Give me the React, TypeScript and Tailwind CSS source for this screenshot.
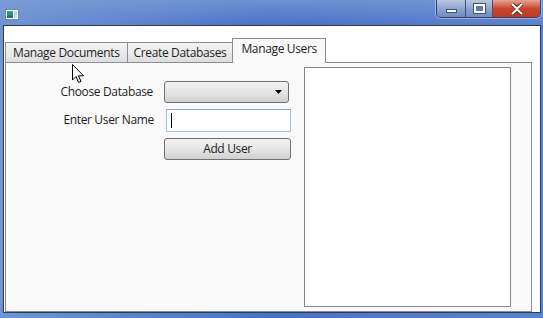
import React from "react";

const font = { fontFamily: '"Open Sans", "Noto Sans", sans-serif' };

function CaptionButtons() {
  return (
    <div className="flex h-[18px] rounded-b-[5px] border border-t-0 border-[#30456a] overflow-hidden shadow-[0_0_0_1px_rgba(255,255,255,0.35)]">
      <div className="w-[29px] flex items-center justify-center bg-gradient-to-b from-[#b8c8e4] via-[#8ea5cf] to-[#6f8cc0] border-r border-[#3c5277]">
        <div className="w-[11px] h-[4px] mt-[5px] bg-white border border-[#44546e]" />
      </div>
      <div className="w-[27px] flex items-center justify-center bg-gradient-to-b from-[#b8c8e4] via-[#8ea5cf] to-[#6f8cc0] border-r border-[#3c5277]">
        <div className="w-[11px] h-[9px] border-[2px] border-white outline outline-1 outline-[#44546e] bg-[#5f7bb0]" />
      </div>
      <div className="w-[47px] flex items-center justify-center bg-gradient-to-b from-[#e8a293] via-[#c9462c] to-[#c23a1f]">
        <svg width="14" height="12" viewBox="0 0 14 12">
          <path
            d="M2 1 L7 5 L12 1 M2 11 L7 7 L12 11"
            stroke="#4a2218"
            strokeWidth="3.6"
            fill="none"
          />
          <path
            d="M2 1 L7 5.5 L12 1 M2 11 L7 6.5 L12 11"
            stroke="#ffffff"
            strokeWidth="2.2"
            fill="none"
          />
        </svg>
      </div>
    </div>
  );
}

function Cursor() {
  return (
    <svg
      className="absolute left-[72px] top-[64px]"
      width="13"
      height="20"
      viewBox="0 0 13 20"
    >
      <path
        d="M0.5 0.5 L0.5 16 L4 12.5 L6.5 18.5 L9 17.5 L6.5 11.8 L11.5 11.8 Z"
        fill="#ffffff"
        stroke="#000000"
        strokeWidth="1"
        strokeLinejoin="round"
      />
    </svg>
  );
}

export default function App() {
  return (
    <div
      className="relative w-[543px] h-[318px] overflow-hidden flex flex-col bg-gradient-to-r from-[#6f94d2] via-[#4a70c6] to-[#5c82cc] tracking-[-0.35px]"
      style={font}
    >
      {/* title bar */}
      <div className="h-[25px] flex items-start justify-between pl-[5px] pr-[2px] bg-gradient-to-b from-[#7d9fd8]/70 to-transparent">
        <div className="mt-[9px] w-[14px] h-[11px] bg-white border border-[#6f8aa8] flex p-[1px] gap-[1px]">
          <div className="w-[6px] bg-gradient-to-b from-[#3aa08a] to-[#1f6e63]" />
          <div className="flex-1 bg-[#b7dbe8]" />
        </div>
        <CaptionButtons />
      </div>

      {/* client area */}
      <div className="ml-[3px] w-[538px] h-[288px] border border-[#2a3b57] bg-white flex flex-col">
        {/* tab strip */}
        <div className="h-[36px] flex items-end pl-[1px] relative z-10">
          <div className="h-[21px] mb-[-1px] px-[7px] flex items-center text-[12px] text-[#1e1e1e] border border-[#8c8e94] bg-gradient-to-b from-[#f3f3f3] via-[#ebebeb] to-[#dddddd]">
            Manage Documents
          </div>
          <div className="h-[21px] mb-[-1px] ml-[-1px] px-[6px] flex items-center text-[12px] text-[#1e1e1e] border border-[#8c8e94] bg-gradient-to-b from-[#f3f3f3] via-[#ebebeb] to-[#dddddd]">
            Create Databases
          </div>
          <div className="h-[25px] mb-[-1px] ml-[-1px] px-[8px] pb-[4px] flex items-center text-[12px] text-[#1e1e1e] border border-b-0 border-[#898c95] bg-[#f9f9f9]">
            Manage Users
          </div>
        </div>

        {/* tab panel */}
        <div className="ml-[1px] w-[527px] flex-1 border border-[#898c95] bg-[#f9f9f9] flex pt-[18px] pl-[10px]">
          <div className="w-[275px] flex flex-col">
            <div className="flex items-center h-[22px]">
              <div className="w-[138px] text-right text-[12px] text-[#1e1e1e] pr-[1px]">
                Choose Database
              </div>
              <div className="ml-[10px] w-[125px] h-[22px] rounded-[3px] border border-[#707070] bg-gradient-to-b from-[#f2f2f2] via-[#e6e6e6] to-[#d0d0d0] flex items-center justify-end pr-[6px]">
                <svg width="7" height="4" viewBox="0 0 7 4">
                  <path d="M0 0 H7 L3.5 4 Z" fill="#000" />
                </svg>
              </div>
            </div>
            <div className="flex items-center h-[22px] mt-[6px]">
              <div className="w-[139px] text-right text-[12px] text-[#1e1e1e] pr-[1px]">
                Enter User Name
              </div>
              <div className="ml-[11px] w-[125px] h-[23px] border border-[#a9c4dc] border-t-[#90a8c4] bg-white flex items-center pl-[4px]">
                <div className="w-[1px] h-[15px] bg-black" />
              </div>
            </div>
            <div className="flex mt-[7px] pl-[148px]">
              <div className="w-[127px] h-[22px] rounded-[3px] border border-[#707070] bg-gradient-to-b from-[#f2f2f2] via-[#e6e6e6] to-[#d0d0d0] flex items-center justify-center text-[12px] text-[#1e1e1e]">
                Add User
              </div>
            </div>
          </div>
          <div className="ml-[13px] mt-[-14px] mb-[4px] w-[207px] border border-[#828790] bg-white" />
        </div>
      </div>
      <Cursor />
    </div>
  );
}
